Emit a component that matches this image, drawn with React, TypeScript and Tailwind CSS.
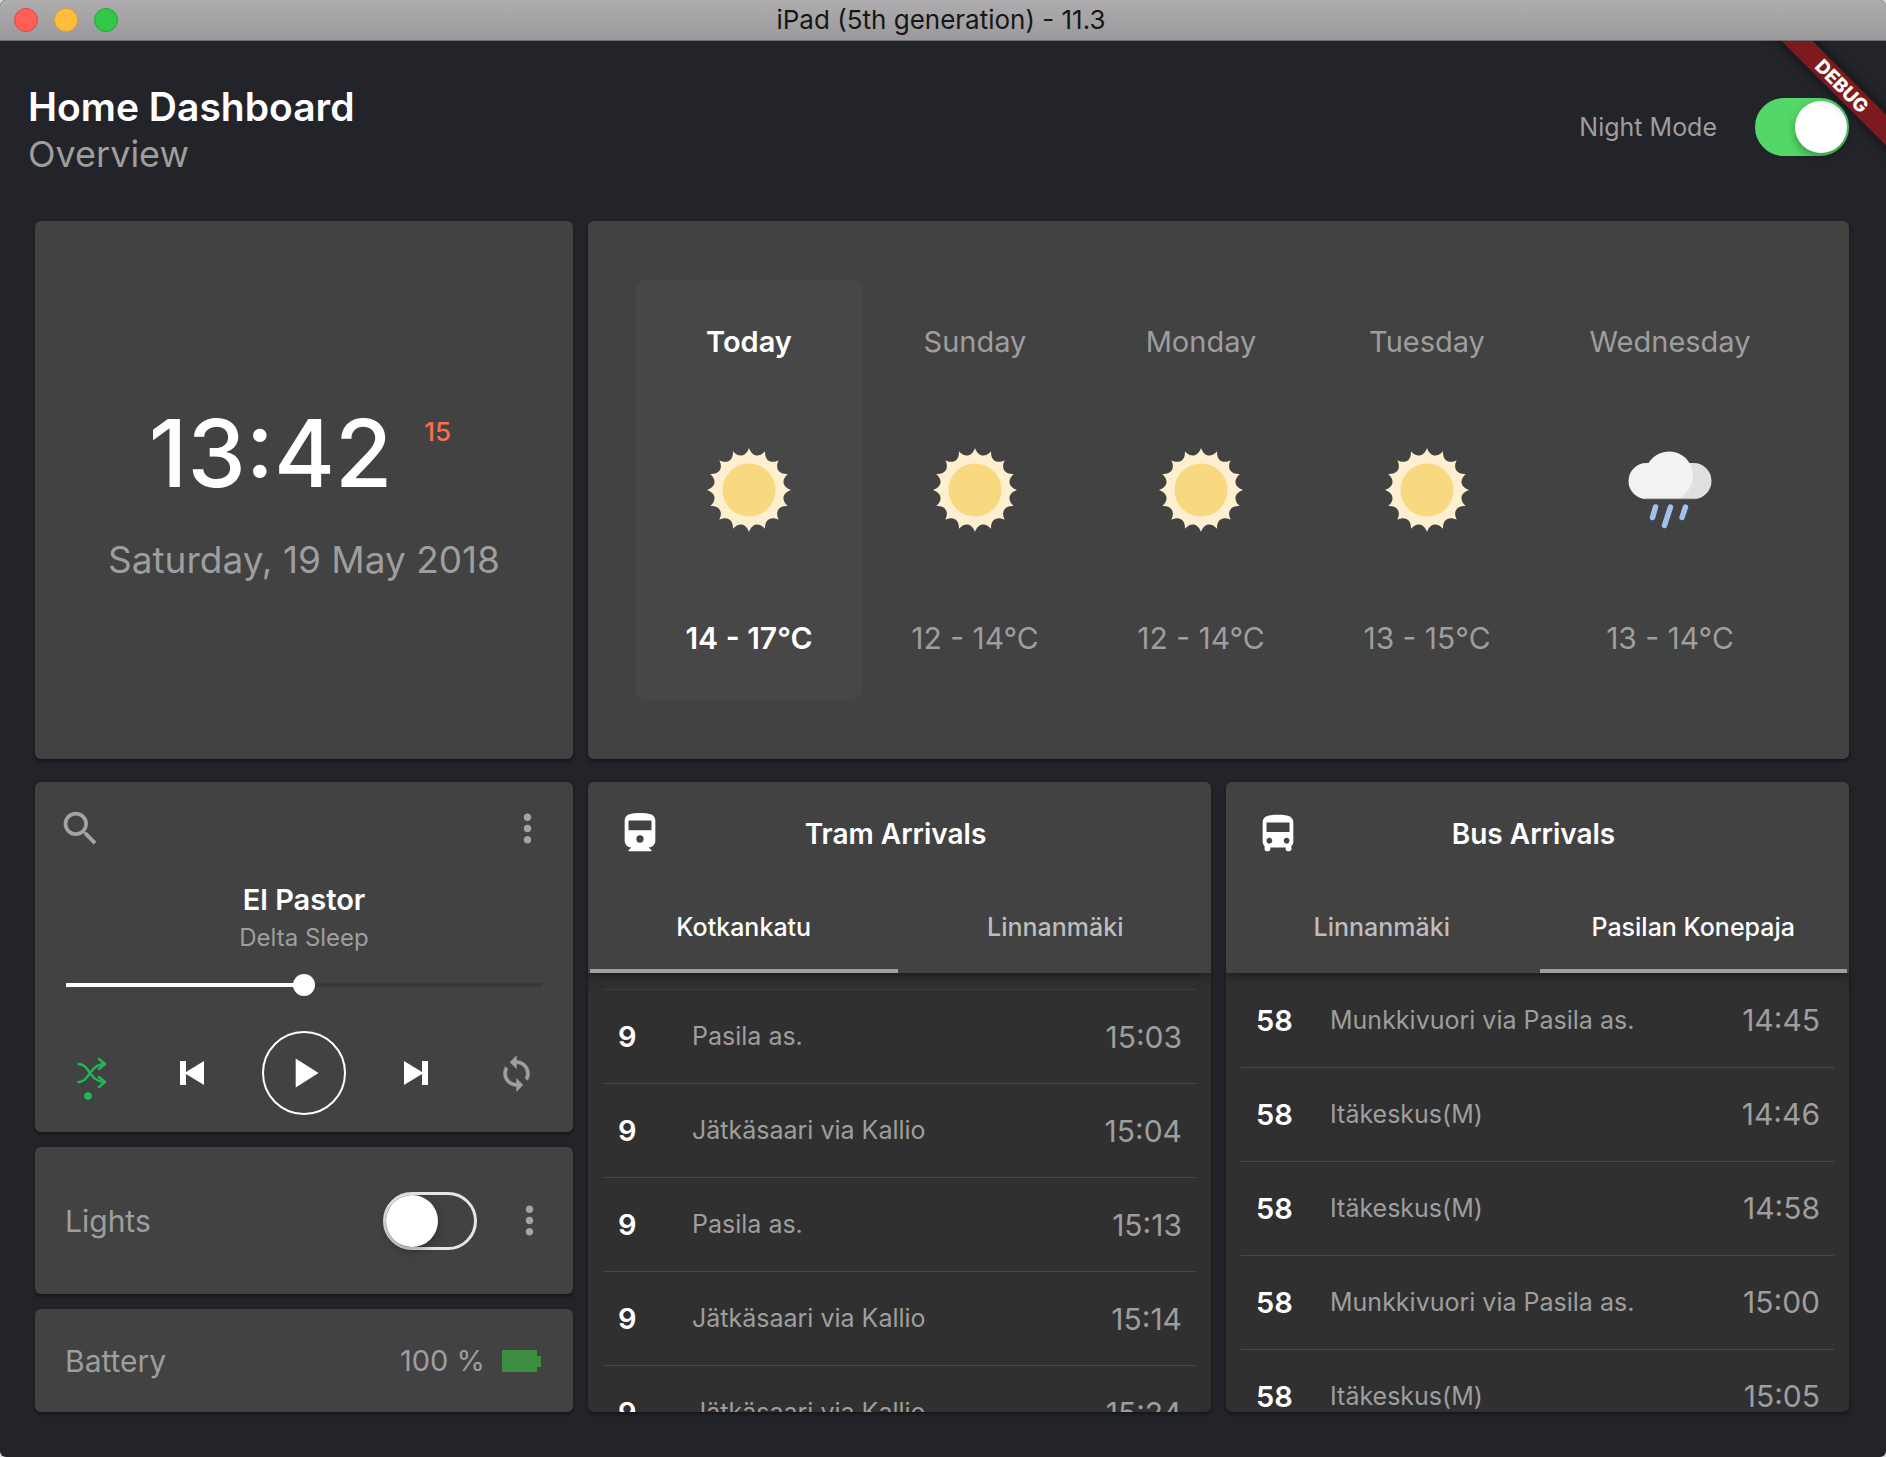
import { useState } from "react";
import type { ReactNode } from "react";
import { MdDirectionsBus, MdMoreVert, MdPlayArrow, MdSearch } from "react-icons/md";

const CARD = "rounded-md bg-[#424242] shadow-[0_2px_4px_rgba(0,0,0,0.45)]";

function Switch({ id, initial }: { id: string; initial: boolean }) {
  const [on, setOn] = useState(initial);
  return (
    <input
      id={id}
      type="checkbox"
      role="switch"
      checked={on}
      onChange={(e) => setOn(e.target.checked)}
      className="relative h-[58px] w-[94px] shrink-0 cursor-pointer appearance-none rounded-full border-[3px] border-[#e5e5ea] before:absolute before:top-0 before:left-0 before:size-[52px] before:rounded-full before:bg-white before:shadow-[0_4px_8px_rgba(0,0,0,0.3)] checked:border-[#53d769] checked:bg-[#53d769] checked:before:left-[37px]"
    />
  );
}

function TitleBar() {
  return (
    <div className="relative flex h-[41px] items-center justify-center rounded-t-md border-b border-[#6f6d70] bg-linear-to-b from-[#aeacaf] to-[#9b999b] pr-1">
      <div className="absolute left-3.5 flex gap-4">
        <button aria-label="Close" className="size-6 rounded-full border border-[#e0443e] bg-[#ff5f57]" />
        <button aria-label="Minimise" className="size-6 rounded-full border border-[#dea123] bg-[#ffbd3e]" />
        <button aria-label="Zoom" className="size-6 rounded-full border border-[#1aab29] bg-[#33c748]" />
      </div>
      <p className="text-[26px] leading-8 text-[#161616]">iPad (5th generation) - 11.3</p>
    </div>
  );
}

function DebugRibbon() {
  return (
    <div className="pointer-events-none absolute top-0 right-0 size-40 overflow-hidden">
      <div className="absolute top-[34px] -right-14 flex h-[22px] w-[200px] rotate-45 items-center justify-center bg-[#7d1a1e] text-[19px] leading-none font-extrabold text-white shadow-[0_0_12px_rgba(0,0,0,0.6)]">
        DEBUG
      </div>
    </div>
  );
}

function polar(radius: number, degrees: number) {
  const a = (degrees * Math.PI) / 180;
  return `${(42 + radius * Math.cos(a)).toFixed(2)} ${(42 + radius * Math.sin(a)).toFixed(2)}`;
}

const SUN_RAYS =
  `M${polar(42, 0)}` +
  Array.from({ length: 16 }, (_, i) => {
    const a = i * 22.5;
    return `C${polar(33.5, a + 5)} ${polar(33.5, a + 17.5)} ${polar(42, a + 22.5)}`;
  }).join("") +
  "Z";

function Sun() {
  return (
    <svg viewBox="0 0 84 84" className="size-[84px]" aria-hidden="true">
      <path d={SUN_RAYS} fill="#fdefd0" />
      <circle cx="42" cy="42" r="26.5" fill="#f8d980" />
    </svg>
  );
}

function RainCloud() {
  return (
    <svg viewBox="0 0 84 84" className="size-[84px]" aria-hidden="true">
      <path d="M48 15H65.500a18 18 0 0 1 0 36H40Z" fill="#e0e0e0" />
      <path d="M18.500 15H20.500A24 24 0 0 1 65 27C65 38 59 46 50 51H18.500a18 18 0 0 1 0-36Z" fill="#f2f2f2" />
      <path d="M17.500 50.800H67" stroke="#9a9a9a" strokeWidth="0.8" />
      <g stroke="#9dc3eb" strokeWidth="5.5" strokeLinecap="round">
        <path d="M27.500 59L24.500 69.500M42.500 59L36.500 77.500M57.500 59L54 69.500" />
      </g>
    </svg>
  );
}

const DAYS = [
  { name: "Today", range: "14 - 17°C", rain: false },
  { name: "Sunday", range: "12 - 14°C", rain: false },
  { name: "Monday", range: "12 - 14°C", rain: false },
  { name: "Tuesday", range: "13 - 15°C", rain: false },
  { name: "Wednesday", range: "13 - 14°C", rain: true },
];

function Weather() {
  return (
    <section className={`col-span-2 grid grid-cols-[1fr_1fr_1fr_1fr_260px] items-center pr-[49px] pl-12 ${CARD}`}>
      {DAYS.map((day, i) => (
        <div
          key={day.name}
          className={`flex h-[420px] flex-col items-center justify-between rounded-[10px] py-[41px] leading-[42px] ${
            i === 0 ? "bg-[#474747] font-semibold text-white" : "text-[#9e9e9e]"
          }`}
        >
          <h3 className="text-[29px]">{day.name}</h3>
          {day.rain ? <RainCloud /> : <Sun />}
          <p className="text-[30px]">{day.range}</p>
        </div>
      ))}
    </section>
  );
}

function Clock() {
  return (
    <section className={`flex min-h-[538px] flex-col items-center justify-center pt-2.5 ${CARD}`}>
      <div className="flex gap-8 pr-2">
        <time className="text-[93px] leading-[90px] font-medium text-white">13:42</time>
        <span className="pt-2 text-[26px] leading-8 font-medium text-[#f9704b]">15</span>
      </div>
      <p className="mt-10 text-[37px] leading-11 text-[#9e9e9e]">Saturday, 19 May 2018</p>
    </section>
  );
}

function Shuffle() {
  return (
    <svg viewBox="0 0 30 44" className="h-11 w-[30px]" fill="none" stroke="#1fb857" strokeWidth="2.4" strokeLinecap="round" strokeLinejoin="round" aria-hidden="true">
      <path d="M1.500 7C9 7 11 14 13 16s4.500 9 15 9M1.500 25C9 25 11 18 13 16s4.500-9 15-9" />
      <path d="M22 2L28 7l-6 5M22 20L28 25l-6 5" />
      <circle cx="11" cy="39" r="3.800" fill="#1fb857" stroke="none" />
    </svg>
  );
}

function SkipPrevious() {
  return (
    <svg viewBox="0 0 24 24" className="size-6" fill="currentColor" aria-hidden="true">
      <path d="M0 0h6v11L24 0v24L6 13v11H0Z" />
    </svg>
  );
}

function SkipNext() {
  return (
    <svg viewBox="0 0 24 24" className="size-6" fill="currentColor" aria-hidden="true">
      <path d="M24 0h-6v11L0 0v24L18 13v11h6Z" />
    </svg>
  );
}

function Repeat() {
  return (
    <svg viewBox="0 0 24 24" className="size-[39px]" fill="currentColor" stroke="currentColor" strokeWidth="0.3" aria-hidden="true">
      <path d="M12 4V1L8 5l4 4V6c3.310 0 6 2.690 6 6 0 1.010-.25 1.970-.7 2.800l1.460 1.460C19.540 15.030 20 13.570 20 12c0-4.420-3.580-8-8-8Zm0 14c-3.310 0-6-2.690-6-6 0-1.010.25-1.970.7-2.800L5.240 7.740C4.460 8.970 4 10.430 4 12c0 4.420 3.580 8 8 8v3l4-4-4-4v3Z" />
    </svg>
  );
}

function Player() {
  const [position, setPosition] = useState(50);
  return (
    <section className={`pt-6 pb-[17px] ${CARD}`}>
      <div className="flex items-center justify-between px-[23px] text-[#a3a3a3]">
        <button aria-label="Search">
          <MdSearch className="size-[45px]" />
        </button>
        <button aria-label="More player options">
          <MdMoreVert className="size-[45px]" />
        </button>
      </div>
      <div className="px-[31px]">
        <h2 className="mt-[31px] text-center text-[29px] leading-9 font-semibold text-white">El Pastor</h2>
        <p className="mt-1.5 text-center text-2xl leading-7 text-[#9e9e9e]">Delta Sleep</p>
        <input
          type="range"
          aria-label="Track position"
          value={position}
          onChange={(e) => setPosition(Number(e.target.value))}
          style={{
            backgroundImage: `linear-gradient(to right, #ffffff ${position}%, #39393b ${position}%)`,
          }}
          className="mt-[22px] block h-[22px] w-full cursor-pointer appearance-none bg-[length:100%_4px] bg-center bg-no-repeat [&::-webkit-slider-thumb]:size-[22px] [&::-webkit-slider-thumb]:appearance-none [&::-webkit-slider-thumb]:rounded-full [&::-webkit-slider-thumb]:bg-white"
        />
        <div className="mt-[35px] flex items-center justify-between text-white">
          <button aria-label="Shuffle" className="flex w-13 justify-center pt-3">
            <Shuffle />
          </button>
          <div className="flex items-center gap-[46px]">
            <button aria-label="Previous track" className="p-3">
              <SkipPrevious />
            </button>
            <button aria-label="Play" className="flex size-[84px] items-center justify-center rounded-full border-2 border-white">
              <MdPlayArrow className="size-[50px]" />
            </button>
            <button aria-label="Next track" className="p-3">
              <SkipNext />
            </button>
          </div>
          <button aria-label="Repeat" className="flex w-13 justify-center text-[#9e9e9e]">
            <Repeat />
          </button>
        </div>
      </div>
    </section>
  );
}

function Lights() {
  return (
    <section className={`flex h-[147px] items-center pr-[21px] pl-[30px] ${CARD}`}>
      <label htmlFor="lights" className="flex-1 text-[30px] leading-9 text-[#9e9e9e]">
        Lights
      </label>
      <Switch id="lights" initial={false} />
      <button aria-label="More light options" className="ml-[30px] text-[#a3a3a3]">
        <MdMoreVert className="size-[45px]" />
      </button>
    </section>
  );
}

function Battery() {
  return (
    <section className={`flex h-[103px] items-center justify-between pr-8 pl-[30px] leading-9 text-[#9e9e9e] ${CARD}`}>
      <h2 className="text-[30px]">Battery</h2>
      <p className="flex items-center gap-[17px] text-[29px]">
        100 %
        <svg viewBox="0 0 39 22" className="h-[22px] w-[39px]" fill="#3c8d40" aria-hidden="true">
          <path d="M0 0h35v6h4v11h-4v5H0Z" />
        </svg>
      </p>
    </section>
  );
}

function TramIcon() {
  return (
    <svg viewBox="0 0 24 24" className="size-[46px]" fill="currentColor" aria-hidden="true">
      <path
        fillRule="evenodd"
        d="M4 15.500C4 17.430 5.570 19 7.500 19L6 20.500v.5h12v-.5L16.500 19c1.930 0 3.500-1.570 3.500-3.500V5c0-3.500-3.580-4-8-4s-8 .5-8 4ZM12 16.500a1.900 1.900 0 1 1 0-3.800 1.900 1.900 0 0 1 0 3.800ZM18 10H6V5h12Z"
      />
    </svg>
  );
}

type Arrival = [line: string, destination: string, time: string];

const TRAMS: Arrival[] = [
  ["9", "Pasila as.", "15:03"],
  ["9", "Jätkäsaari via Kallio", "15:04"],
  ["9", "Pasila as.", "15:13"],
  ["9", "Jätkäsaari via Kallio", "15:14"],
  ["9", "Jätkäsaari via Kallio", "15:24"],
];

const BUSES: Arrival[] = [
  ["58", "Munkkivuori via Pasila as.", "14:45"],
  ["58", "Itäkeskus(M)", "14:46"],
  ["58", "Itäkeskus(M)", "14:58"],
  ["58", "Munkkivuori via Pasila as.", "15:00"],
  ["58", "Itäkeskus(M)", "15:05"],
];

function Arrivals({
  title,
  icon,
  stops,
  initialStop,
  rows,
  scrolled,
}: {
  title: string;
  icon: ReactNode;
  stops: string[];
  initialStop: number;
  rows: Arrival[];
  scrolled: boolean;
}) {
  const [active, setActive] = useState(initialStop);
  return (
    <section className="overflow-hidden rounded-md bg-[#303030] shadow-[0_2px_4px_rgba(0,0,0,0.45)]">
      <header className="relative bg-[#424242] shadow-[0_2px_12px_rgba(0,0,0,0.5)]">
        <div className="grid h-26 grid-cols-[104px_1fr_112px] items-center justify-items-center text-white">
          {icon}
          <h2 className="text-[28px] leading-9 font-semibold">{title}</h2>
        </div>
        <div role="tablist" className="flex gap-1 px-0.5">
          {stops.map((stop, i) => (
            <button
              key={stop}
              role="tab"
              aria-selected={active === i}
              onClick={() => setActive(i)}
              className={`h-[87px] flex-1 border-b-4 pt-px text-[25px] font-medium ${
                active === i ? "border-[#a0a0a0] text-white" : "border-transparent text-[#bdbdbd]"
              }`}
            >
              {stop}
            </button>
          ))}
        </div>
      </header>
      <div className={`h-[439px] overflow-hidden px-[15px] ${scrolled ? "pt-4" : ""}`}>
        <table className={`w-full ${scrolled ? "border-t border-[#3f3f3f]" : ""}`}>
          <tbody>
            {rows.map(([line, destination, time]) => (
              <tr key={time} className="h-[94px] border-b border-[#474747]">
                <td className="w-[89px] pt-px pl-[15px] text-[29px] font-semibold text-white">{line}</td>
                <td className="pt-px text-[25px] text-[#9e9e9e]">{destination}</td>
                <td className="pt-px pr-3.5 text-right text-[30px] text-[#9e9e9e]">{time}</td>
              </tr>
            ))}
          </tbody>
        </table>
      </div>
    </section>
  );
}

export default function App() {
  return (
    <div className="min-h-screen bg-[#d8d8da] font-['Inter',sans-serif]">
      <div className="flex min-h-screen flex-col rounded-md bg-[#232429]">
        <TitleBar />
        <main className="relative flex-1 pb-11">
          <header className="flex h-[180px] items-center justify-between pr-[37px] pb-2 pl-7">
            <div className="pt-1.5">
              <h1 className="text-[39px] leading-[48px] font-semibold text-white">Home Dashboard</h1>
              <p className="text-4xl leading-[46px] text-[#9e9e9e]">Overview</p>
            </div>
            <div className="flex items-center gap-[38px]">
              <label htmlFor="night-mode" className="text-[25px] leading-8 text-[#9e9e9e]">
                Night Mode
              </label>
              <Switch id="night-mode" initial={true} />
            </div>
          </header>
          <DebugRibbon />
          <div className="grid grid-cols-[538fr_623fr_623fr] gap-x-[15px] gap-y-[23px] pr-[37px] pl-[35px]">
            <Clock />
            <Weather />
            <div className="flex flex-col gap-[15px]">
              <Player />
              <Lights />
              <Battery />
            </div>
            <Arrivals
              title="Tram Arrivals"
              icon={<TramIcon />}
              stops={["Kotkankatu", "Linnanmäki"]}
              initialStop={0}
              rows={TRAMS}
              scrolled={true}
            />
            <Arrivals
              title="Bus Arrivals"
              icon={<MdDirectionsBus className="size-[46px]" />}
              stops={["Linnanmäki", "Pasilan Konepaja"]}
              initialStop={1}
              rows={BUSES}
              scrolled={false}
            />
          </div>
        </main>
      </div>
    </div>
  );
}
